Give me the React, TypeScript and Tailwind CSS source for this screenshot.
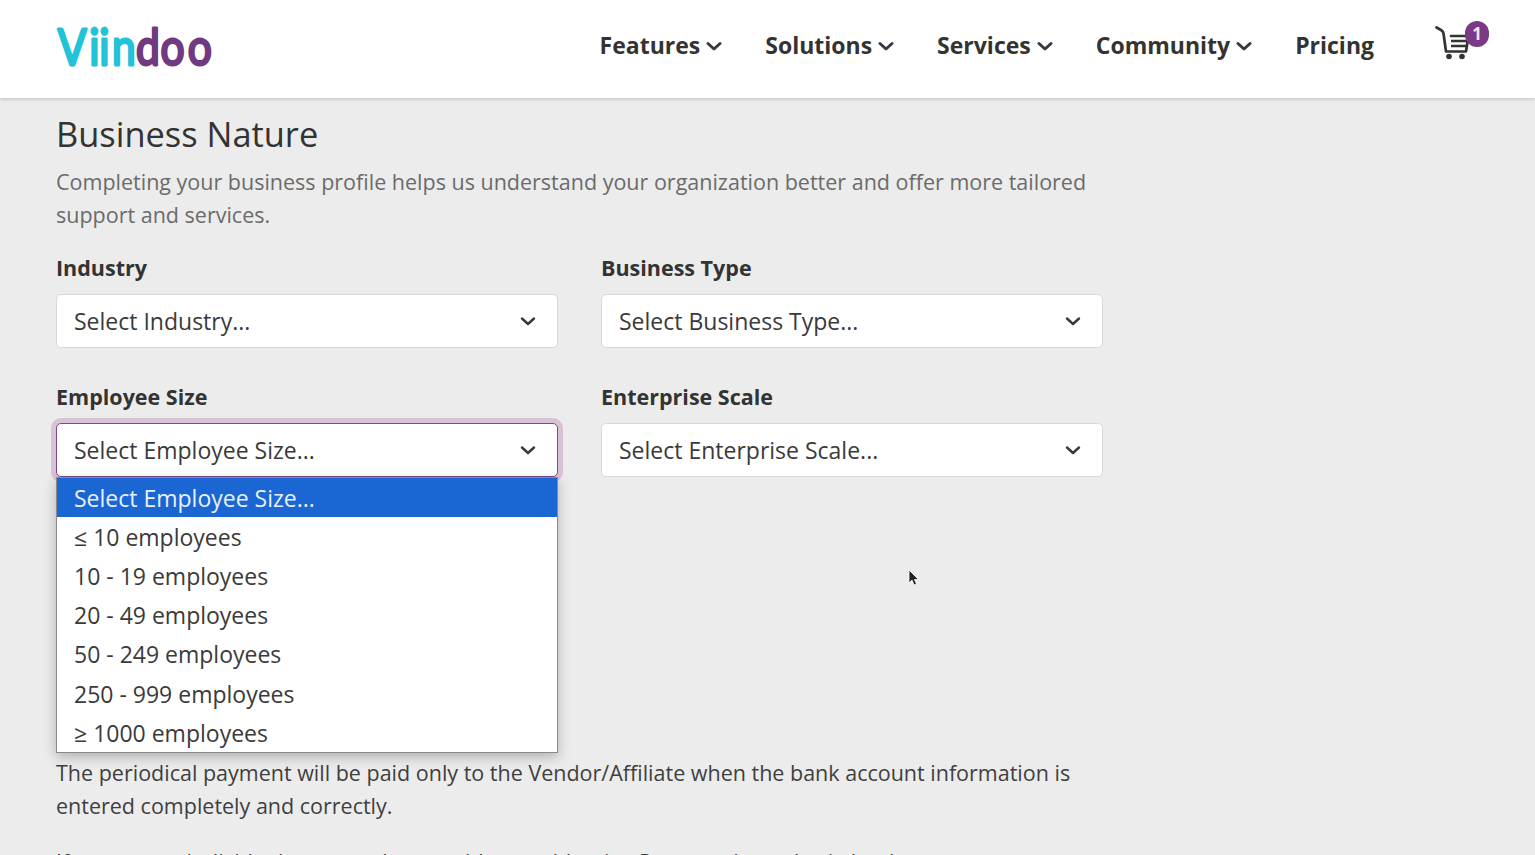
import React from "react";

const navItems = [
  { label: "Features", menu: true },
  { label: "Solutions", menu: true },
  { label: "Services", menu: true },
  { label: "Community", menu: true },
  { label: "Pricing", menu: false },
];

const employeeOptions = [
  "≤ 10 employees",
  "10 - 19 employees",
  "20 - 49 employees",
  "50 - 249 employees",
  "250 - 999 employees",
  "≥ 1000 employees",
];

const Chevron = ({ weight }: { weight: number }) => (
  <svg width="16" height="10" viewBox="0 0 16 10" fill="none" stroke="#343a40" strokeWidth={weight} strokeLinecap="round" strokeLinejoin="round">
    <path d="M2 2.5 L8 8 L14 2.5" />
  </svg>
);

const Logo = () => (
  <svg width="160" height="50" viewBox="0 0 160 50" className="block">
    <g transform="scale(0.85 1)">
      <text
        y="44"
        fontFamily="Lato, sans-serif"
        fontSize="50"
        strokeWidth="2.8"
        strokeLinejoin="round"
      >
        <tspan x="2 39 51 66" fill="#22c3d8" stroke="#22c3d8">Viin</tspan>
        <tspan x="94 123 155" fill="#6f3a80" stroke="#6f3a80">doo</tspan>
      </text>
    </g>
  </svg>
);

const Cart = () => (
  <div className="relative h-[48px] w-[56px]">
    <svg width="36" height="38" viewBox="0 0 36 38" className="absolute left-0 top-[2px]" fill="none" stroke="#333" strokeWidth="2.7">
      <path d="M1.5 3.5 L6 6 Q8 7 8.5 9.5 L11 27.5 H31 L33.5 12 H16" strokeLinecap="round" strokeLinejoin="round" />
      <path d="M16 17 H33 M16 22 H32" />
      <circle cx="14" cy="32.5" r="2.8" fill="#333" stroke="none" />
      <circle cx="27" cy="32.5" r="2.8" fill="#333" stroke="none" />
    </svg>
    <span className="absolute left-[30px] top-[-1px] flex h-[26px] w-[24px] items-center justify-center rounded-full bg-[#7c3a86] text-[17px] font-bold text-[#f2e6f2]">
      1
    </span>
  </div>
);

const Field = ({ label, placeholder, focused }: { label: string; placeholder: string; focused?: boolean }) => (
  <div className="relative w-[502px] shrink-0">
    <div className="mb-[10px] h-[33px] text-[21.5px] font-bold leading-[33px] text-[#333]">{label}</div>
    <div
      className={
        focused
          ? "flex h-[54px] items-center justify-between rounded-[5px] border border-[#7c4a86] bg-white pl-[17px] pr-[21px] shadow-[0_0_0_5px_#d8c3d6]"
          : "flex h-[54px] items-center justify-between rounded-[5px] border border-[#d8d8d8] bg-white pl-[17px] pr-[21px]"
      }
    >
      <span className="text-[23px] text-[#3a3a3a]">{placeholder}</span>
      <Chevron weight={2.4} />
    </div>
  </div>
);

export default function App() {
  return (
    <div className="relative h-[855px] w-[1535px] overflow-hidden bg-[#ececec] font-['Open_Sans',sans-serif]">
      <header className="relative z-10 flex h-[98px] items-center justify-between bg-white pb-[6px] pl-[56px] pr-[44px] shadow-[0_1px_4px_rgba(0,0,0,0.2)]">
        <Logo />
        <div className="flex items-center">
          <nav className="mr-[61px] mb-[1px] flex items-center gap-[43px]">
            {navItems.map((item) => (
              <a key={item.label} className="flex items-center gap-[6px] text-[23px] font-bold text-[#333]">
                {item.label}
                {item.menu && <Chevron weight={3} />}
              </a>
            ))}
          </nav>
          <Cart />
        </div>
      </header>

      <main className="w-[1159px] pl-[56px] text-[21.5px] leading-[33px]">
        <h2 className="mt-[11px] h-[50px] text-[34.4px] leading-[50px] text-[#333]">Business Nature</h2>
        <p className="mt-[6px] w-[1047px] text-[#6b6b6b]">
          Completing your business profile helps us understand your organization better and offer more tailored
          support and services.
        </p>
        <div className="mt-[20px] flex gap-[43px]">
          <Field label="Industry" placeholder="Select Industry..." />
          <Field label="Business Type" placeholder="Select Business Type..." />
        </div>
        <div className="mt-[32px] flex gap-[43px]">
          <div className="relative shrink-0">
            <Field label="Employee Size" placeholder="Select Employee Size..." focused />
            <ul className="absolute left-0 top-[97px] z-20 h-[276px] w-[502px] border border-[#8a8a8a] bg-white text-[23px] text-[#3a3a3a] shadow-[0_4px_12px_rgba(0,0,0,0.25)]">
              <li className="flex h-[39.3px] items-center bg-[#1a66d2] pl-[17px] pt-[1px] text-[#e8f0fb]">Select Employee Size...</li>
              {employeeOptions.map((opt) => (
                <li key={opt} className="flex h-[39.2px] items-center pl-[17px] pt-[1px]">
                  {opt}
                </li>
              ))}
            </ul>
          </div>
          <Field label="Enterprise Scale" placeholder="Select Enterprise Scale..." />
        </div>
        <p className="mt-[279px] w-[1047px] text-[#3f3f3f]">
          The periodical payment will be paid only to the Vendor/Affiliate when the bank account information is
          entered completely and correctly.
        </p>
        <p className="mt-[23px] w-[1047px] text-[#3f3f3f]">
          If you are an individual, you need to provide your identity. Payment is made via bank account.
        </p>
      </main>

      <svg width="12" height="18" viewBox="0 0 12 18" className="absolute left-[908px] top-[569px]">
        <path d="M1 1 V14 L4 11 L6 16 L8.5 15 L6.5 10.5 H10.5 Z" fill="#222" stroke="#fff" strokeWidth="0.8" />
      </svg>
    </div>
  );
}
